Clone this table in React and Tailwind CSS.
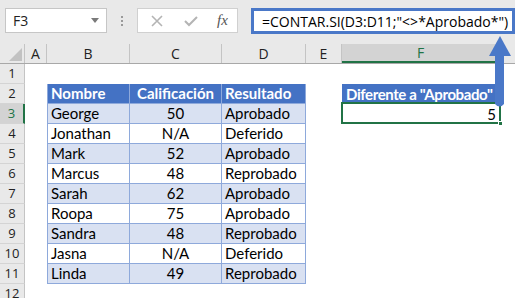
const cols = [
  { key: "A", w: 22 },
  { key: "B", w: 83 },
  { key: "C", w: 92 },
  { key: "D", w: 84 },
  { key: "E", w: 36 },
  { key: "F", w: 158 },
];

const data = [
  ["George", "50", "Aprobado"],
  ["Jonathan", "N/A", "Deferido"],
  ["Mark", "52", "Aprobado"],
  ["Marcus", "48", "Reprobado"],
  ["Sarah", "62", "Aprobado"],
  ["Roopa", "75", "Aprobado"],
  ["Sandra", "48", "Reprobado"],
  ["Jasna", "N/A", "Deferido"],
  ["Linda", "49", "Reprobado"],
];

const cellFont = { fontFamily: "Lato, 'Noto Sans', sans-serif" };
const uiFont = { fontFamily: "'Open Sans', 'Noto Sans', sans-serif" };

function RowNum({ n, active }) {
  return (
    <div
      className={`w-[25px] h-full shrink-0 flex items-center justify-center text-[13px] border-b border-[#d4d4d4] ${
        active
          ? "bg-[#d3d3d3] text-[#217346] border-r-2 border-r-[#217346]"
          : "bg-[#e9e9e9] text-[#222] border-r border-r-[#c4c4c4]"
      }`}
      style={uiFont}
    >
      {n}
    </div>
  );
}

function TableCell({ w, children, head, shade, align = "left", first }) {
  return (
    <div
      className={`h-full shrink-0 flex items-center px-[3px] text-[15px] border-r border-b border-[#8ea9db] ${
        first ? "border-l" : ""
      } ${head ? "bg-[#4472c4] text-white font-bold" : shade ? "bg-[#d9e1f2] text-black" : "bg-white text-black"} ${
        align === "center" ? "justify-center" : "justify-start"
      }`}
      style={{ width: w, ...cellFont }}
    >
      {children}
    </div>
  );
}

function Blank({ w }) {
  return <div className="h-full shrink-0 bg-white" style={{ width: w }} />;
}

function SheetRow({ n, children, active }) {
  return (
    <div className="flex h-[20px]">
      <RowNum n={n} active={active} />
      {children}
      <div className="flex-1 bg-white" />
    </div>
  );
}

export default function App() {
  return (
    <div className="relative w-[515px] h-[298px] overflow-hidden bg-white select-none">
      {/* formula bar */}
      <div className="h-[44px] bg-[#e9e9e9] flex items-start pt-[8px] pl-[5px]">
        <div className="w-[102px] h-[25px] bg-white border border-[#c6c6c6] flex items-center pl-[7px] pr-[7px] justify-between">
          <span className="text-[14px] text-[#222]" style={uiFont}>F3</span>
          <span className="w-0 h-0 border-l-[4px] border-r-[4px] border-t-[5px] border-l-transparent border-r-transparent border-t-[#7a7a7a]" />
        </div>
        <div className="w-[30px] h-[25px] flex flex-col items-center justify-center gap-[2px]">
          <span className="w-[2px] h-[2px] bg-[#9a9a9a]" />
          <span className="w-[2px] h-[2px] bg-[#9a9a9a]" />
          <span className="w-[2px] h-[2px] bg-[#9a9a9a]" />
        </div>
        <div className="w-[101px] h-[25px] bg-white border border-[#d0d0d0] flex items-center">
          <svg width="14" height="14" viewBox="0 0 14 14" className="ml-[12px]">
            <path d="M2 2 L12 12 M12 2 L2 12" stroke="#b4b4b4" strokeWidth="1.6" />
          </svg>
          <svg width="16" height="14" viewBox="0 0 16 14" className="ml-[19px]">
            <path d="M2 7 L6 11 L14 3" stroke="#b4b4b4" strokeWidth="2" fill="none" />
          </svg>
          <span
            className="ml-[18px] text-[15px] italic text-[#555]"
            style={{ fontFamily: "'Liberation Serif', serif" }}
          >
            <i>f</i>x
          </span>
        </div>
        <div className="ml-[13px] w-[264px] h-[26px] bg-white border-[3px] border-[#4a78c8] flex items-center pl-[8px]">
          <span className="text-[14px] text-black whitespace-nowrap" style={uiFont}>
            =CONTAR.SI(D3:D11;"&lt;&gt;*Aprobado*")
          </span>
        </div>
      </div>

      {/* column headers */}
      <div className="flex h-[20px] bg-[#e9e9e9] border-b border-[#a8a8a8]">
        <div className="w-[25px] h-full shrink-0 border-r border-[#c4c4c4] flex items-end justify-end p-[2px]">
          <svg width="13" height="13" viewBox="0 0 13 13">
            <path d="M13 0 L13 13 L0 13 Z" fill="#c2c2c2" />
          </svg>
        </div>
        {cols.map((c) => (
          <div
            key={c.key}
            className={`h-full shrink-0 flex items-center justify-center text-[14px] border-r border-[#c4c4c4] ${
              c.key === "F" ? "bg-[#d3d3d3] text-[#217346] border-b-2 border-b-[#217346]" : "text-[#222]"
            }`}
            style={{ width: c.w, ...uiFont }}
          >
            {c.key}
          </div>
        ))}
        <div className="flex-1" />
      </div>

      {/* sheet rows */}
      <SheetRow n={1}>
        <Blank w={22} />
      </SheetRow>
      <SheetRow n={2}>
        <Blank w={22} />
        <TableCell w={83} head first>Nombre</TableCell>
        <TableCell w={92} head align="center">Calificación</TableCell>
        <TableCell w={84} head>Resultado</TableCell>
        <Blank w={36} />
        <div
          className="w-[158px] h-full shrink-0 bg-[#4472c4] text-white font-bold text-[15px] tracking-[-0.4px] flex items-center pl-[4px] whitespace-nowrap overflow-hidden"
          style={cellFont}
        >
          Diferente a "Aprobado"
        </div>
      </SheetRow>
      {data.map((r, i) => (
        <SheetRow key={i} n={i + 3} active={i === 0}>
          <Blank w={22} />
          <TableCell w={83} shade={i % 2 === 0} first>{r[0]}</TableCell>
          <TableCell w={92} shade={i % 2 === 0} align="center">{r[1]}</TableCell>
          <TableCell w={84} shade={i % 2 === 0}>{r[2]}</TableCell>
          <Blank w={36} />
          {i === 0 ? (
            <div className="relative w-[158px] h-full shrink-0 bg-white flex items-center justify-end pr-[4px] text-[15px]" style={cellFont}>
              5
              <span className="absolute -left-[1px] -top-[2px] -right-[1px] bottom-0 border-2 border-[#217346]" />
              <span className="absolute -right-[3px] -bottom-[2px] w-[5px] h-[5px] bg-[#217346] border border-white" />
            </div>
          ) : (
            <Blank w={158} />
          )}
        </SheetRow>
      ))}
      <SheetRow n={12}>
        <Blank w={22} />
      </SheetRow>

      {/* callout arrow from F3 up to the formula bar */}
      <svg className="absolute left-[486px] top-[34px]" width="28" height="76" viewBox="0 0 28 76">
        <path d="M9 22 L9 70 Q13.5 75 18 70 L18 22 Z" fill="#4a78c8" />
        <path d="M3 22 L14 2 L25 22 Z" fill="#4a78c8" />
      </svg>
    </div>
  );
}
